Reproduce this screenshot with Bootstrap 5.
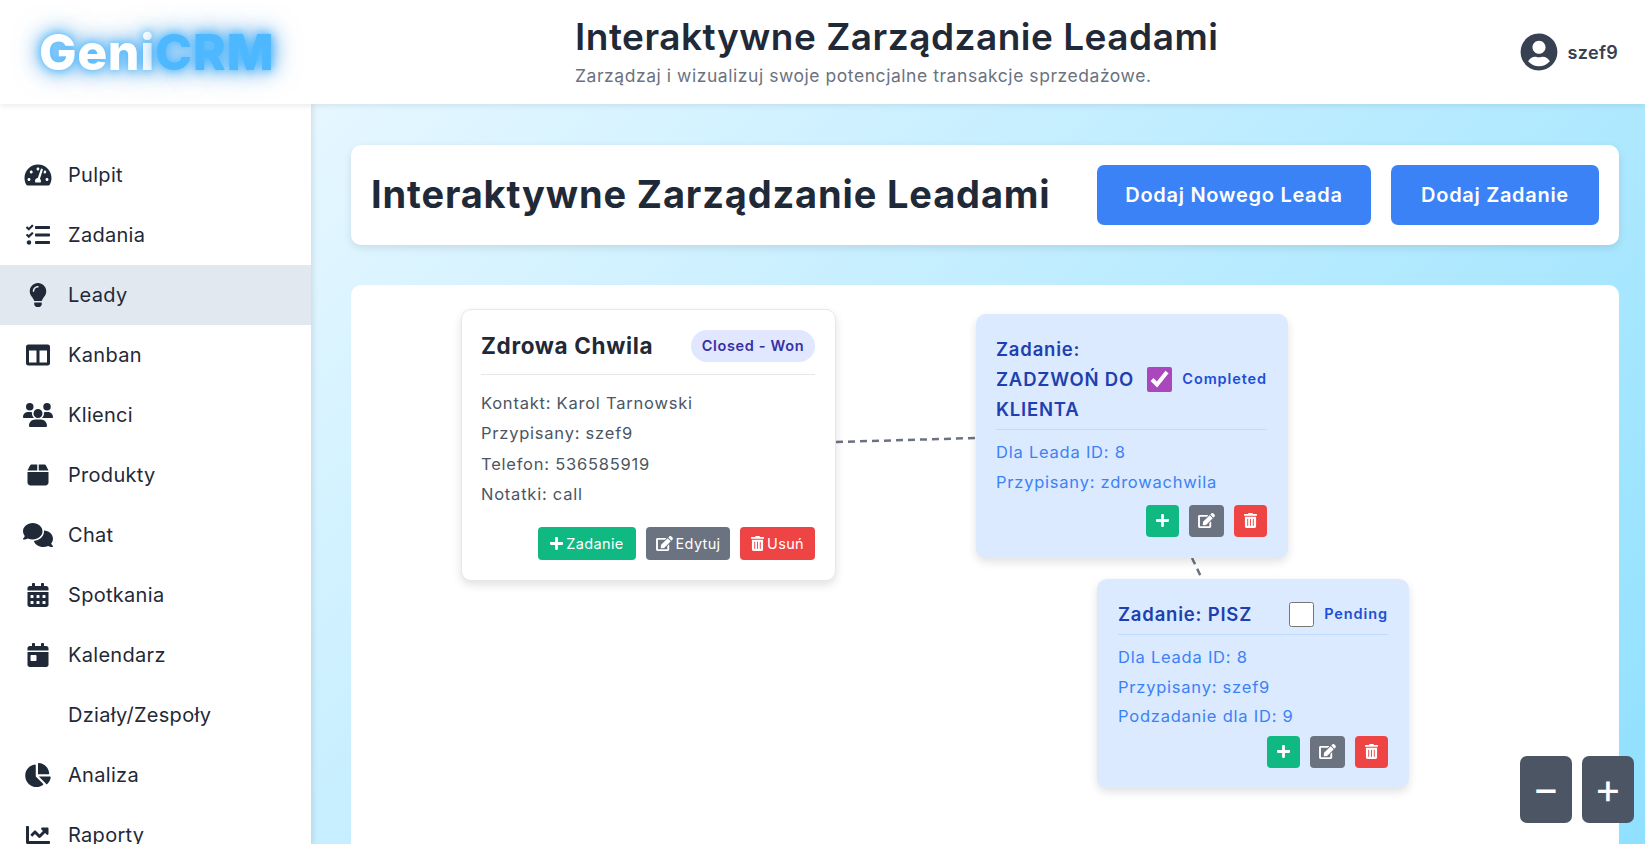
<!DOCTYPE html>
<html lang="pl">
<head>
  <meta charset="UTF-8">
  <meta name="viewport" content="width=device-width, initial-scale=1.0">
  <title>Interaktywne Zarządzanie Leadami</title>
  <link href="https://cdn.jsdelivr.net/npm/bootstrap@5.3.0/dist/css/bootstrap.min.css" rel="stylesheet">
  <style>
    body { font-family: Inter, "Liberation Sans", sans-serif; color: #1f2937; }
    .app-top { height: 104px; background: #fff; box-shadow: 0 2px 6px rgba(0,0,0,.08); z-index: 3; flex: none; }
    .logo-box { width: 575px; padding-left: 39px; flex: none; }
    .logo-text { font-size: 50px; font-weight: 800; line-height: 1; color: #fff; letter-spacing: .6px;
      text-shadow: 0 0 8px #4db8ff, 0 0 18px #4db8ff, 0 0 28px rgba(30,110,200,.6); }
    .logo-text span { color: #4db8ff; }
    .page-title { font-size: 37px; font-weight: 600; line-height: 44px; margin: -2px 0 0; color: #1f2937; letter-spacing: .5px; }
    .page-sub { font-size: 17.5px; line-height: 24px; color: #6b7280; margin: 5px 0 0; letter-spacing: .55px; }
    .user-box { padding-right: 27px; gap: 10px; font-size: 18px; font-weight: 600; color: #374151; letter-spacing: .3px; }
    .user-box svg { width: 38px; height: 38px; fill: #374151; }

    .side-nav { width: 311px; flex: none; background: #fff; padding-top: 41px; box-shadow: 2px 0 6px rgba(0,0,0,.1); z-index: 2; overflow: hidden; }
    .side-item { height: 60px; padding-left: 23px; gap: 15px; font-size: 20px; color: #1f2937; text-decoration: none; flex: none; letter-spacing: .3px; }
    .side-item.on { background: #e2e8f0; }
    .side-icon { width: 30px; height: 24px; fill: #1f2937; flex: none; }

    .main-area { padding: 41px 26px 0 40px; background: linear-gradient(135deg, #e6f7ff, #8fe0ff); min-width: 0; }
    .title-box { height: 100px; background: #fff; border-radius: 10px; padding: 0 20px; margin-bottom: 40px; box-shadow: 0 3px 8px rgba(0,0,0,.1); flex: none; }
    .title-box h2 { font-size: 38px; font-weight: 700; margin: 0; color: #1f2937; letter-spacing: .85px; white-space: nowrap; }
    .btn-pair { gap: 20px; }
    .blue-btn { height: 60px; background: #3b82f6; border: 0; border-radius: 7px; color: #fff; font-size: 20px; font-weight: 600; letter-spacing: .7px; white-space: nowrap; padding: 0; }
    .blue-btn:hover { background: #3b82f6; color: #fff; }
    .blue-btn.one { width: 274px; }
    .blue-btn.two { width: 208px; }

    .flow-canvas { background: #fff; border-radius: 10px 10px 0 0; min-height: 0; }
    .flow-lines { position: absolute; left: 0; top: 0; width: 100%; height: 100%; }
    .flow-lines line { stroke: #6b7280; stroke-width: 2.5; stroke-dasharray: 7 5; }
    .flow-node { position: absolute; border-radius: 10px; padding: 20px 21px 20px 20px; box-shadow: 0 4px 10px rgba(0,0,0,.12); }
    .lead-node { left: 110px; top: 24px; width: 375px; height: 272px; background: #fff; border: 1px solid #e5e7eb; padding: 20px 20px 20px 19px; }
    .task-node { background: #dbeafe; color: #3b82f6; }
    .task-a { left: 625px; top: 29px; width: 312px; height: 244px; }
    .task-b { left: 746px; top: 294px; width: 312px; height: 209px; padding-left: 21px; }
    .node-head { border-bottom: 1px solid #e5e7eb; height: 45px; margin-bottom: 13px; }
    .node-name { font-size: 22.5px; font-weight: 700; margin: 0; color: #1f2937; letter-spacing: .65px; line-height: 32px; }
    .status-pill { height: 32px; width: 124px; border-radius: 16px; background: #e0e7ff; color: #3730a3; font-size: 14.5px; font-weight: 600; letter-spacing: .65px; }
    .info-line { font-size: 16.5px; line-height: 30.3px; margin: 0; color: #4b5563; letter-spacing: .77px; white-space: nowrap; }
    .task-node .info-line { color: #3b82f6; }
    .info-line.tight { margin-top: -2px; }
    .task-head { border-bottom: 1px solid #bfdbfe; margin-bottom: 7px; padding-bottom: 5px; }
    .task-name { font-size: 18.5px; font-weight: 600; line-height: 30px; color: #1e40af; margin: 0; letter-spacing: .8px; }
    .task-name.wrap-name { width: 140px; }
    .task-check { width: 25px; height: 25px; margin: 0; accent-color: #ab47bc; flex: none; }
    .task-state { font-size: 14.5px; font-weight: 600; color: #1d4ed8; margin-left: 10px; letter-spacing: .9px; }
    .act-btn { height: 33px; border: 0; border-radius: 4px; color: #fff; font-size: 14.5px; letter-spacing: .35px; padding: 0; gap: 3px; }
    .act-btn:hover { color: #fff; }
    .act-btn svg { height: 15px; fill: #fff; }
    .task-node .act-btn { height: 32px; }
    .act-row { gap: 10px; }
    .lead-node .act-row { margin-top: 18px; }
    .task-a .act-row { margin-top: 7px; }
    .task-b .act-row { margin-top: 5px; }
    .c-green, .c-green:hover { background: #10b981; }
    .c-gray, .c-gray:hover { background: #6b7280; }
    .c-red, .c-red:hover { background: #ef4444; }
    .w-zad { width: 98px; }
    .w-edy { width: 84px; }
    .w-usu { width: 75px; }
    .w-a { width: 33px; }
    .w-b { width: 35px; }
    .zoom-tools { position: absolute; right: 11px; bottom: 21px; gap: 10px; z-index: 5; }
    .zoom-btn { width: 52px; height: 67px; background: #4b5563; border: 0; border-radius: 7px; color: #fff; font-size: 42px; font-weight: 400; line-height: 1; padding: 0 0 4px; }
    .zoom-btn:hover { color: #fff; background: #4b5563; }
    .body-row { min-height: 0; }
  </style>
</head>
<body class="overflow-hidden">
  <svg width="0" height="0" class="position-absolute">
    <symbol id="i-plus" viewBox="0 0 448 512"><path d="M416 208H272V64c0-17.67-14.33-32-32-32h-32c-17.67 0-32 14.33-32 32v144H32c-17.67 0-32 14.33-32 32v32c0 17.67 14.33 32 32 32h144v144c0 17.67 14.33 32 32 32h32c17.67 0 32-14.33 32-32V304h144c17.67 0 32-14.33 32-32v-32c0-17.67-14.33-32-32-32z"/></symbol>
    <symbol id="i-trash" viewBox="0 0 448 512"><path d="M32 464a48 48 0 0 0 48 48h288a48 48 0 0 0 48-48V128H32zm272-256a16 16 0 0 1 32 0v224a16 16 0 0 1-32 0zm-96 0a16 16 0 0 1 32 0v224a16 16 0 0 1-32 0zm-96 0a16 16 0 0 1 32 0v224a16 16 0 0 1-32 0zM432 32H312l-9.4-18.7A24 24 0 0 0 281.1 0H166.8a23.72 23.72 0 0 0-21.4 13.3L136 32H16A16 16 0 0 0 0 48v32a16 16 0 0 0 16 16h416a16 16 0 0 0 16-16V48a16 16 0 0 0-16-16z"/></symbol>
    <symbol id="i-edit" viewBox="0 0 576 512"><path d="M402.6 83.2l90.2 90.2c3.8 3.8 3.8 10 0 13.8L274.4 405.6l-92.8 10.3c-12.4 1.4-22.9-9.1-21.5-21.5l10.3-92.8L388.8 83.2c3.8-3.8 10-3.8 13.8 0zm162-22.9l-48.8-48.8c-15.2-15.2-39.9-15.2-55.2 0l-35.4 35.4c-3.8 3.8-3.8 10 0 13.8l90.2 90.2c3.8 3.8 10 3.8 13.8 0l35.4-35.4c15.2-15.3 15.2-40 0-55.2zM384 346.2V448H64V128h229.8c3.2 0 6.2-1.3 8.5-3.5l40-40c7.6-7.6 2.2-20.5-8.5-20.5H48C21.5 64 0 85.5 0 112v352c0 26.5 21.5 48 48 48h352c26.5 0 48-21.5 48-48V306.2c0-10.7-12.9-16-20.5-8.5l-40 40c-2.2 2.3-3.5 5.3-3.5 8.5z"/></symbol>
    <symbol id="i-gauge" viewBox="0 0 576 512"><path d="M288 32C128.94 32 0 160.94 0 320c0 52.8 14.25 102.26 39.06 144.8 5.61 9.62 16.3 15.2 27.44 15.2h443c11.14 0 21.83-5.58 27.44-15.2C561.75 422.26 576 372.8 576 320c0-159.06-128.94-288-288-288zm0 64c14.71 0 26.58 10.13 30.32 23.65-1.11 2.26-2.64 4.23-3.45 6.67l-9.22 27.67c-5.13 3.49-10.97 6.01-17.64 6.01-17.67 0-32-14.33-32-32S270.33 96 288 96zM96 384c-17.67 0-32-14.33-32-32s14.33-32 32-32 32 14.33 32 32-14.33 32-32 32zm48-160c-17.67 0-32-14.33-32-32s14.33-32 32-32 32 14.33 32 32-14.33 32-32 32zm246.77-72.41l-61.33 184C343.13 347.33 352 364.54 352 384c0 11.72-3.38 22.55-8.88 32H232.88c-5.5-9.45-8.88-20.28-8.88-32 0-33.94 26.5-61.43 59.9-63.59l61.34-184.01c4.17-12.56 17.73-19.45 30.36-15.17 12.57 4.19 19.35 17.79 15.17 30.36zm14.66 57.2l15.52-46.55c3.47-1.29 7.13-2.23 11.05-2.23 17.67 0 32 14.33 32 32s-14.33 32-32 32c-11.38-.01-20.89-6.28-26.57-15.22zM480 384c-17.67 0-32-14.33-32-32s14.33-32 32-32 32 14.33 32 32-14.33 32-32 32z"/></symbol>
    <symbol id="i-tasks" viewBox="0 0 512 512"><path d="M139.61 35.5a12 12 0 0 0-17 0L58.93 98.81l-22.7-22.12a12 12 0 0 0-17 0L3.53 92.41a12 12 0 0 0 0 17l47.59 47.4a12.78 12.78 0 0 0 17.61 0l15.59-15.62L156.52 69a12.09 12.09 0 0 0 .09-17zm0 159.19a12 12 0 0 0-17 0l-63.68 63.72-22.7-22.1a12 12 0 0 0-17 0L3.53 252a12 12 0 0 0 0 17L51 316.5a12.77 12.77 0 0 0 17.6 0l15.7-15.69 72.2-72.22a12 12 0 0 0 .09-16.9zM64 368c-26.49 0-48.59 21.5-48.59 48S37.53 464 64 464a48 48 0 0 0 0-96zm432 16H208a16 16 0 0 0-16 16v32a16 16 0 0 0 16 16h288a16 16 0 0 0 16-16v-32a16 16 0 0 0-16-16zm0-320H208a16 16 0 0 0-16 16v32a16 16 0 0 0 16 16h288a16 16 0 0 0 16-16V80a16 16 0 0 0-16-16zm0 160H208a16 16 0 0 0-16 16v32a16 16 0 0 0 16 16h288a16 16 0 0 0 16-16v-32a16 16 0 0 0-16-16z"/></symbol>
    <symbol id="i-bulb" viewBox="0 0 352 512"><path d="M96.06 454.35c.01 6.29 1.87 12.45 5.36 17.69l17.09 25.69a31.99 31.99 0 0 0 26.64 14.28h61.71a31.99 31.99 0 0 0 26.64-14.28l17.09-25.69a31.989 31.989 0 0 0 5.36-17.69l.04-38.35H96.01l.05 38.35zM0 176c0 44.37 16.45 84.85 43.56 115.78 16.52 18.85 42.36 58.23 52.21 91.45.04.26.07.52.11.78h160.24c.04-.26.07-.51.11-.78 9.85-33.22 35.69-72.6 52.21-91.45C335.55 260.85 352 220.37 352 176 352 78.61 272.91-.3 175.45 0 73.44.31 0 82.97 0 176zm176-80c-44.11 0-80 35.89-80 80 0 8.84-7.16 16-16 16s-16-7.16-16-16c0-61.76 50.24-112 112-112 8.84 0 16 7.16 16 16s-7.16 16-16 16z"/></symbol>
    <symbol id="i-cols" viewBox="0 0 512 512"><path d="M464 32H48C21.49 32 0 53.49 0 80v352c0 26.51 21.49 48 48 48h416c26.51 0 48-21.49 48-48V80c0-26.51-21.49-48-48-48zM224 416H64V160h160v256zm224 0H288V160h160v256z"/></symbol>
    <symbol id="i-users" viewBox="0 0 640 512"><path d="M144 0a80 80 0 1 1 0 160A80 80 0 1 1 144 0zM512 0a80 80 0 1 1 0 160A80 80 0 1 1 512 0zM0 298.7C0 239.8 47.8 192 106.7 192h42.7c15.9 0 31 3.5 44.6 9.7c-1.3 7.2-1.9 14.7-1.9 22.3c0 38.2 16.8 72.5 43.3 96c-.2 0-.4 0-.7 0H21.3C9.6 320 0 310.4 0 298.7zM405.3 320c-.2 0-.4 0-.7 0c26.6-23.5 43.3-57.8 43.3-96c0-7.6-.7-15-1.9-22.3c13.6-6.3 28.7-9.7 44.6-9.7h42.7C592.2 192 640 239.8 640 298.7c0 11.8-9.6 21.3-21.3 21.3H405.3zM224 224a96 96 0 1 1 192 0 96 96 0 1 1 -192 0zM128 485.3C128 411.7 187.7 352 261.3 352H378.7C452.3 352 512 411.7 512 485.3c0 14.7-11.9 26.7-26.7 26.7H154.7c-14.7 0-26.7-11.9-26.7-26.7z"/></symbol>
    <symbol id="i-box" viewBox="0 0 448 512"><path d="M50.7 58.5L0 160H208V32H93.7C75.5 32 58.9 42.3 50.7 58.5zM240 160H448L397.3 58.5C389.1 42.3 372.5 32 354.3 32H240V160zm208 32H0V416c0 35.3 28.7 64 64 64H384c35.3 0 64-28.7 64-64V192z"/></symbol>
    <symbol id="i-chat" viewBox="0 0 640 512"><path d="M208 352c114.9 0 208-78.8 208-176S322.9 0 208 0S0 78.8 0 176c0 38.6 14.7 74.3 39.6 103.4c-3.5 9.4-8.7 17.7-14.2 24.7c-4.8 6.2-9.7 11-13.3 14.3c-1.8 1.6-3.3 2.9-4.3 3.7c-.5 .4-.9 .7-1.1 .8l-.2 .2 0 0 0 0C1 327.2-1.4 334.4 .8 340.9S9.1 352 16 352c21.8 0 43.8-5.6 62.1-12.5c9.2-3.5 17.8-7.4 25.3-11.4C134.1 343.3 169.8 352 208 352zM448 176c0 112.3-99.1 196.9-216.5 207C255.8 457.7 336.1 512 432 512c38.2 0 73.9-8.7 104.7-23.9c7.5 4 16 7.9 25.2 11.4c18.3 6.9 40.3 12.5 62.1 12.5c6.9 0 13.1-4.5 15.2-11.1c2.1-6.6-.2-13.8-5.8-17.9l0 0 0 0-.2-.2c-.2-.2-.6-.4-1.1-.8c-1-.8-2.5-2-4.3-3.7c-3.6-3.3-8.5-8.1-13.3-14.3c-5.5-7-10.7-15.4-14.2-24.7c24.9-29 39.6-64.7 39.6-103.4c0-92.8-84.9-168.9-192.6-175.5c.4 5.1 .6 10.3 .6 15.5z"/></symbol>
    <symbol id="i-cal" viewBox="0 0 448 512"><path d="M0 464c0 26.5 21.5 48 48 48h352c26.5 0 48-21.5 48-48V192H0v272zm320-196c0-6.6 5.4-12 12-12h40c6.6 0 12 5.4 12 12v40c0 6.6-5.4 12-12 12h-40c-6.6 0-12-5.4-12-12v-40zm0 128c0-6.6 5.4-12 12-12h40c6.6 0 12 5.4 12 12v40c0 6.6-5.4 12-12 12h-40c-6.6 0-12-5.4-12-12v-40zM192 268c0-6.6 5.4-12 12-12h40c6.6 0 12 5.4 12 12v40c0 6.6-5.4 12-12 12h-40c-6.6 0-12-5.4-12-12v-40zm0 128c0-6.6 5.4-12 12-12h40c6.6 0 12 5.4 12 12v40c0 6.6-5.4 12-12 12h-40c-6.6 0-12-5.4-12-12v-40zM64 268c0-6.6 5.4-12 12-12h40c6.6 0 12 5.4 12 12v40c0 6.6-5.4 12-12 12H76c-6.6 0-12-5.4-12-12v-40zm0 128c0-6.6 5.4-12 12-12h40c6.6 0 12 5.4 12 12v40c0 6.6-5.4 12-12 12H76c-6.6 0-12-5.4-12-12v-40zM400 64h-48V16c0-8.8-7.2-16-16-16h-32c-8.8 0-16 7.2-16 16v48H160V16c0-8.8-7.2-16-16-16h-32c-8.8 0-16 7.2-16 16v48H48C21.5 64 0 85.5 0 112v48h448v-48c0-26.5-21.5-48-48-48z"/></symbol>
    <symbol id="i-day" viewBox="0 0 448 512"><path d="M0 464c0 26.5 21.5 48 48 48h352c26.5 0 48-21.5 48-48V192H0v272zm64-192c0-8.8 7.2-16 16-16h96c8.8 0 16 7.2 16 16v96c0 8.8-7.2 16-16 16H80c-8.8 0-16-7.2-16-16v-96zM400 64h-48V16c0-8.8-7.2-16-16-16h-32c-8.8 0-16 7.2-16 16v48H160V16c0-8.8-7.2-16-16-16h-32c-8.8 0-16 7.2-16 16v48H48C21.5 64 0 85.5 0 112v48h448v-48c0-26.5-21.5-48-48-48z"/></symbol>
    <symbol id="i-pie" viewBox="0 0 544 512"><path d="M527.79 288H290.5l158.03 158.03c6.04 6.04 15.98 6.53 22.19.68 38.7-36.46 65.32-85.61 73.13-140.86 1.34-9.46-6.51-17.85-16.06-17.85zm-15.83-64.8C503.72 103.74 408.26 8.28 288.8.04 279.68-.59 272 7.1 272 16.24V240h223.77c9.14 0 16.82-7.68 16.19-16.8zM224 288V50.71c0-9.55-8.39-17.4-17.84-16.06C86.99 51.49-4.1 155.6.14 280.37 4.5 408.51 114.83 513.59 243.03 511.98c50.4-.63 96.97-16.87 135.26-44.03 7.9-5.6 8.42-17.23 1.57-24.08L224 288z"/></symbol>
    <symbol id="i-line" viewBox="0 0 512 512"><path d="M496 384H64V80c0-8.84-7.16-16-16-16H16C7.16 64 0 71.16 0 80v336c0 17.67 14.33 32 32 32h464c8.84 0 16-7.16 16-16v-32c0-8.84-7.16-16-16-16zM464 96H345.94c-21.38 0-32.09 25.85-16.97 40.97l32.4 32.4L288 242.75l-73.37-73.37c-12.5-12.5-32.76-12.5-45.25 0l-68.69 68.69c-6.25 6.25-6.25 16.38 0 22.63l22.62 22.62c6.25 6.25 16.38 6.25 22.63 0L192 237.25l73.37 73.37c12.5 12.5 32.76 12.5 45.25 0l96-96 32.4 32.4c15.12 15.12 40.97 4.41 40.97-16.97V112c0-8.84-7.16-16-16-16z"/></symbol>
  </svg>

  <div class="d-flex flex-column vh-100 position-relative">
    <header class="app-top d-flex align-items-center">
      <div class="logo-box"><div class="logo-text">Geni<span>CRM</span></div></div>
      <div class="flex-grow-1">
        <h1 class="page-title">Interaktywne Zarządzanie Leadami</h1>
        <p class="page-sub">Zarządzaj i wizualizuj swoje potencjalne transakcje sprzedażowe.</p>
      </div>
      <div class="user-box d-flex align-items-center">
        <svg viewBox="0 0 496 512"><path d="M248 8C111 8 0 119 0 256s111 248 248 248 248-111 248-248S385 8 248 8zm0 96c48.6 0 88 39.4 88 88s-39.4 88-88 88-88-39.4-88-88 39.4-88 88-88zm0 344c-58.7 0-111.3-26.6-146.5-68.2 18.8-35.4 55.6-59.8 98.5-59.8 2.4 0 4.8.4 7.1 1.1 13 4.2 26.6 6.9 40.9 6.9 14.3 0 28-2.7 40.9-6.9 2.3-.7 4.7-1.1 7.1-1.1 42.9 0 79.7 24.4 98.5 59.8C359.3 421.4 306.7 448 248 448z"/></svg>
        <span>szef9</span>
      </div>
    </header>

    <div class="body-row d-flex flex-grow-1">
      <nav class="side-nav d-flex flex-column">
        <a class="side-item d-flex align-items-center" href="#"><svg class="side-icon"><use href="#i-gauge"/></svg>Pulpit</a>
        <a class="side-item d-flex align-items-center" href="#"><svg class="side-icon"><use href="#i-tasks"/></svg>Zadania</a>
        <a class="side-item on d-flex align-items-center" href="#"><svg class="side-icon"><use href="#i-bulb"/></svg>Leady</a>
        <a class="side-item d-flex align-items-center" href="#"><svg class="side-icon"><use href="#i-cols"/></svg>Kanban</a>
        <a class="side-item d-flex align-items-center" href="#"><svg class="side-icon"><use href="#i-users"/></svg>Klienci</a>
        <a class="side-item d-flex align-items-center" href="#"><svg class="side-icon"><use href="#i-box"/></svg>Produkty</a>
        <a class="side-item d-flex align-items-center" href="#"><svg class="side-icon"><use href="#i-chat"/></svg>Chat</a>
        <a class="side-item d-flex align-items-center" href="#"><svg class="side-icon"><use href="#i-cal"/></svg>Spotkania</a>
        <a class="side-item d-flex align-items-center" href="#"><svg class="side-icon"><use href="#i-day"/></svg>Kalendarz</a>
        <a class="side-item d-flex align-items-center" href="#"><span class="side-icon"></span>Działy/Zespoły</a>
        <a class="side-item d-flex align-items-center" href="#"><svg class="side-icon"><use href="#i-pie"/></svg>Analiza</a>
        <a class="side-item d-flex align-items-center" href="#"><svg class="side-icon"><use href="#i-line"/></svg>Raporty</a>
      </nav>

      <main class="main-area flex-grow-1 d-flex flex-column">
        <section class="title-box d-flex align-items-center justify-content-between">
          <h2>Interaktywne Zarządzanie Leadami</h2>
          <div class="btn-pair d-flex">
            <button class="btn blue-btn one">Dodaj Nowego Leada</button>
            <button class="btn blue-btn two">Dodaj Zadanie</button>
          </div>
        </section>

        <section class="flow-canvas flex-grow-1 position-relative">
          <svg class="flow-lines">
            <line x1="485" y1="157" x2="625" y2="153"/>
            <line x1="841" y1="273" x2="851" y2="294"/>
          </svg>

          <article class="flow-node lead-node">
            <div class="node-head d-flex align-items-start justify-content-between">
              <h3 class="node-name">Zdrowa Chwila</h3>
              <span class="status-pill d-flex align-items-center justify-content-center">Closed - Won</span>
            </div>
            <p class="info-line">Kontakt: Karol Tarnowski</p>
            <p class="info-line">Przypisany: szef9</p>
            <p class="info-line">Telefon: 536585919</p>
            <p class="info-line">Notatki: call</p>
            <div class="act-row d-flex justify-content-end">
              <button class="btn act-btn c-green w-zad d-flex align-items-center justify-content-center"><svg width="13" height="15"><use href="#i-plus"/></svg>Zadanie</button>
              <button class="btn act-btn c-gray w-edy d-flex align-items-center justify-content-center"><svg width="17" height="15"><use href="#i-edit"/></svg>Edytuj</button>
              <button class="btn act-btn c-red w-usu d-flex align-items-center justify-content-center"><svg width="13" height="15"><use href="#i-trash"/></svg>Usuń</button>
            </div>
          </article>

          <article class="flow-node task-node task-a">
            <div class="task-head d-flex align-items-center justify-content-between">
              <h3 class="task-name wrap-name">Zadanie: ZADZWOŃ DO KLIENTA</h3>
              <div class="d-flex align-items-center">
                <input class="task-check" type="checkbox" checked>
                <span class="task-state">Completed</span>
              </div>
            </div>
            <p class="info-line">Dla Leada ID: 8</p>
            <p class="info-line">Przypisany: zdrowachwila</p>
            <div class="act-row d-flex justify-content-end">
              <button class="btn act-btn c-green w-a d-flex align-items-center justify-content-center"><svg width="13" height="15"><use href="#i-plus"/></svg></button>
              <button class="btn act-btn c-gray w-b d-flex align-items-center justify-content-center"><svg width="17" height="15"><use href="#i-edit"/></svg></button>
              <button class="btn act-btn c-red w-a d-flex align-items-center justify-content-center"><svg width="13" height="15"><use href="#i-trash"/></svg></button>
            </div>
          </article>

          <article class="flow-node task-node task-b">
            <div class="task-head d-flex align-items-center justify-content-between">
              <h3 class="task-name">Zadanie: PISZ</h3>
              <div class="d-flex align-items-center">
                <input class="task-check" type="checkbox">
                <span class="task-state">Pending</span>
              </div>
            </div>
            <p class="info-line">Dla Leada ID: 8</p>
            <p class="info-line">Przypisany: szef9</p>
            <p class="info-line tight">Podzadanie dla ID: 9</p>
            <div class="act-row d-flex justify-content-end">
              <button class="btn act-btn c-green w-a d-flex align-items-center justify-content-center"><svg width="13" height="15"><use href="#i-plus"/></svg></button>
              <button class="btn act-btn c-gray w-b d-flex align-items-center justify-content-center"><svg width="17" height="15"><use href="#i-edit"/></svg></button>
              <button class="btn act-btn c-red w-a d-flex align-items-center justify-content-center"><svg width="13" height="15"><use href="#i-trash"/></svg></button>
            </div>
          </article>
        </section>
      </main>
    </div>

    <div class="zoom-tools d-flex">
      <button class="btn zoom-btn">−</button>
      <button class="btn zoom-btn">+</button>
    </div>
  </div>
</body>
</html>
